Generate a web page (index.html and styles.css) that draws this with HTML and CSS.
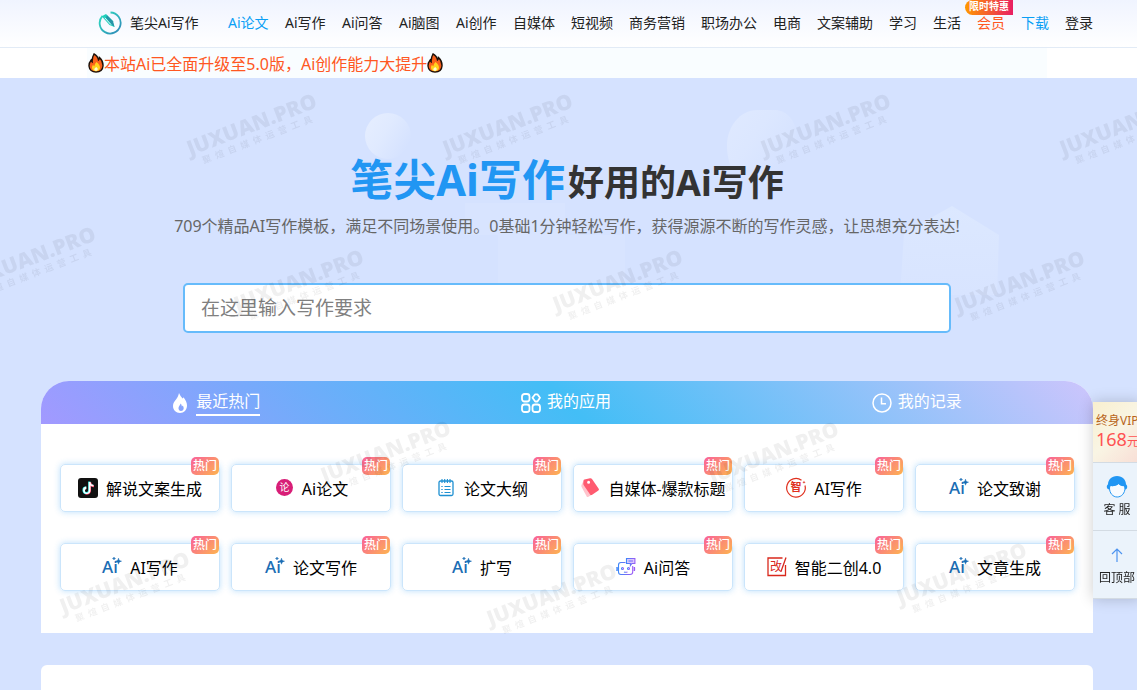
FILE: index.html
```html
<!DOCTYPE html>
<html lang="zh-CN">
<head>
<meta charset="utf-8">
<meta name="viewport" content="width=device-width, initial-scale=1">
<title>笔尖Ai写作</title>
<link rel="stylesheet" href="styles.css">
</head>
<body>
<svg class="defs" aria-hidden="true">
  <defs>
    <linearGradient id="logo-g" x1="0" y1="0" x2="1" y2="1"><stop offset="0" stop-color="#2fe0c0"/><stop offset="1" stop-color="#2f86b8"/></linearGradient>
    <linearGradient id="ball-g" x1="0" y1="0" x2="1" y2=".6"><stop offset="0" stop-color="#e6eeff"/><stop offset=".5" stop-color="#e0eaff"/><stop offset="1" stop-color="#d5e2ff"/></linearGradient>
    <linearGradient id="hex-g" x1="0" y1="0" x2="0" y2="1"><stop offset="0" stop-color="#dce8ff"/><stop offset="1" stop-color="#d8e4ff"/></linearGradient>
    <linearGradient id="bot-g" x1="0" y1="0" x2="1" y2="0"><stop offset="0" stop-color="#3f86f8"/><stop offset="1" stop-color="#9b5cf6"/></linearGradient>
    <symbol id="fire" viewBox="0 0 16 20">
      <path d="M6 1c2 1 4 3 4.500 6 .8-.6 1-1.400 1-2.400C14 7 15.200 9.800 15 13c-.3 4-3.200 6-7 6s-6.800-2.200-7-6c-.1-2.800 1-4.500 2.200-6 .2 1 .5 1.700 1 2C4 6 4.500 3.500 6 1z" fill="#f9601b" stroke="#1c1008" stroke-width="1.400"/>
      <path d="M8.500 9c2.500 2 3.700 3.800 3.500 6-.2 2-1.800 3.200-4 3.200s-3.800-1.200-4-3.200c-.1-1.500.5-2.700 1.200-3.500.2 1 .6 1.500 1.200 1.800C6.500 11.600 7.300 10.300 8.500 9z" fill="#ffd21f"/>
      <path d="M8.200 14c1.300 1 1.600 1.600 1.500 2.500-.1.900-.8 1.400-1.700 1.400s-1.600-.5-1.700-1.400c0-.8.700-1.500 1.900-2.500z" fill="#fffbd0"/>
    </symbol>
    <symbol id="spark" viewBox="0 0 20 20">
      <path d="M16.500 1.200c.4 2 .9 2.500 3 3-2.100.5-2.600 1-3 3-.4-2-.9-2.500-3-3 2.100-.5 2.600-1 3-3zM12 0c.2 1 .5 1.300 1.500 1.500C12.500 1.700 12.200 2 12 3c-.2-1-.5-1.300-1.500-1.500C11.500 1.300 11.800 1 12 0z" fill="#1a6db4" stroke="#1a6db4" stroke-width=".5"/>
    </symbol>
  </defs>
</svg>

<header class="topbar">
  <div class="topbar-inner">
    <a class="brand" href="#">
      <svg class="brand-logo" viewBox="0 0 24 24" aria-hidden="true">
        <path d="M12.500 1.500A10.500 10.500 0 1 1 4.500 4.800" fill="none" stroke="url(#logo-g)" stroke-width="1.800"/>
        <path d="M3.800 5.200 8 3l6.500 6.500 2 6.500-5-2z" fill="#1fd0bb"/>
        <path d="M9 4.200 15 10.300l1.500 5.700-3-2.500-5.500-7z" fill="#2794a8"/>
        <path d="M6.800 6.800 13 13.600" stroke="#f5f8ff" stroke-width=".9"/>
      </svg>
      <span>笔尖Ai写作</span>
    </a>
    <nav class="nav">
      <a class="nav-link nav-ai is-blue" href="#">Ai论文</a>
      <a class="nav-link nav-ai" href="#">Ai写作</a>
      <a class="nav-link nav-ai" href="#">Ai问答</a>
      <a class="nav-link nav-ai" href="#">Ai脑图</a>
      <a class="nav-link nav-ai" href="#">Ai创作</a>
      <a class="nav-link" href="#">自媒体</a>
      <a class="nav-link" href="#">短视频</a>
      <a class="nav-link" href="#">商务营销</a>
      <a class="nav-link" href="#">职场办公</a>
      <a class="nav-link" href="#">电商</a>
      <a class="nav-link" href="#">文案辅助</a>
      <a class="nav-link" href="#">学习</a>
      <a class="nav-link" href="#">生活</a>
      <a class="nav-link is-vip" href="#">会员<span class="promo">限时特惠</span></a>
      <a class="nav-link is-blue" href="#">下载</a>
      <a class="nav-link" href="#">登录</a>
    </nav>
  </div>
</header>

<div class="notice">
  <p class="notice-inner"><svg class="fire" aria-hidden="true"><use href="#fire"/></svg>本站Ai已全面升级至5.0版，Ai创作能力大提升<svg class="fire" aria-hidden="true"><use href="#fire"/></svg></p>
</div>

<main class="page">
  <svg class="decor" viewBox="0 0 1137 300" preserveAspectRatio="xMidYMin slice" aria-hidden="true">
    <circle cx="388" cy="58" r="23" fill="url(#ball-g)"/>
    <path d="M727 67c0-18 13-35 30-35h20c12 2 20 12 20 30v30h-65c-3-7-5-15-5-25z" fill="url(#ball-g)" opacity=".6"/>
    <path d="M465 125h100v32h60v50H498v-50h-33z" fill="#d8e4ff"/>
    <path d="M952 128l47 29-2 60h-97l4-62z" fill="url(#hex-g)"/>
  </svg>

  <section class="hero">
    <h1 class="title"><span class="title-main">笔尖Ai写作</span><span class="title-sub">好用的Ai写作</span></h1>
    <p class="lead">709个精品AI写作模板，满足不同场景使用。0基础1分钟轻松写作，获得源源不断的写作灵感，让思想充分表达!</p>
    <input class="prompt" type="text" aria-label="写作要求" placeholder="在这里输入写作要求">
  </section>

  <section class="panel">
    <div class="tabs" role="tablist">
      <button class="tab is-active" type="button" role="tab" aria-selected="true">
        <svg class="tab-icon" viewBox="0 0 20 20" aria-hidden="true"><path fill-rule="evenodd" d="M9 0c1.200 2.500 2.300 4 3.500 5.500.5-.4.800-.8 1-1.300 2.300 3 3.500 5.500 3.500 8.300 0 4.500-3 7.500-7 7.500s-7-3-7-7c0-3 1.300-4.500 3-6.500C7.500 4.500 8.500 2.500 9 0zm1.800 10.500c-1 1.800-2.300 3-2.300 4.800 0 1.600 1 2.700 2.500 2.700s2.700-1.100 2.700-2.700c0-1-.4-2-1-2.700-.2.500-.4.700-.8.900-.1-1.200-.5-2-1.100-3z" fill="#fff"/></svg>
        <span class="tab-label">最近热门</span>
      </button>
      <button class="tab" type="button" role="tab" aria-selected="false">
        <svg class="tab-icon" viewBox="0 0 20 20" fill="none" stroke="#fff" stroke-width="1.800" aria-hidden="true"><rect x="1" y="1" width="7.500" height="7.500" rx="2.500"/><rect x="1" y="11.500" width="7.500" height="7.500" rx="2.500"/><rect x="11.500" y="11.500" width="7.500" height="7.500" rx="2.500"/><path d="M14.200 1.300h2.200l2.600 3.500-2.600 3.700h-2.200l-2.700-3.700z" stroke-linejoin="round"/></svg>
        <span class="tab-label">我的应用</span>
      </button>
      <button class="tab" type="button" role="tab" aria-selected="false">
        <svg class="tab-icon" viewBox="0 0 20 20" fill="none" stroke="#fff" stroke-width="1.500" aria-hidden="true"><circle cx="10" cy="10" r="9"/><path d="M9.500 4.500v6.200h4.500"/></svg>
        <span class="tab-label">我的记录</span>
      </button>
    </div>

    <div class="grid">
      <a class="card" href="#"><svg class="icon" viewBox="0 0 20 20" aria-hidden="true"><rect width="20" height="20" rx="3" fill="#111"/><path d="M10.200 3.500h2.200c.2 1.800 1.200 2.800 3 3v2.200c-1.200 0-2.200-.3-3-.9v4.400a4 4 0 1 1-4.500-4v2.300a1.800 1.800 0 1 0 2.300 1.700z" fill="#25f4ee"/><path d="M11.200 4.300h2c.3 1.800 1.200 2.700 2.800 3v1.900c-1.100 0-2.200-.3-3-.9v4.500a4 4 0 0 1-6.200 3.200 4 4 0 0 0 4.400-4z" fill="#fe2c55"/><path d="M10.700 3.900h1.800c.3 1.900 1.200 2.900 3 3.100v1.500c-1.200 0-2.200-.3-3-1v4.700a3.700 3.700 0 1 1-4.100-3.700V11a1.900 1.900 0 1 0 2.300 1.800z" fill="#fff"/></svg>解说文案生成<span class="hot">热门</span></a>
      <a class="card" href="#"><svg class="icon" viewBox="0 0 20 20" aria-hidden="true"><circle cx="10.500" cy="9.500" r="8.500" fill="#d81e77"/><text class="glyph" x="10.500" y="13" font-size="10" fill="#fff">论</text></svg>Ai论文<span class="hot">热门</span></a>
      <a class="card" href="#"><svg class="icon" viewBox="0 0 20 20" fill="none" stroke="#1e90d2" aria-hidden="true"><rect x="3" y="3" width="14" height="14.500" rx="1.500" stroke-width="1.300"/><path d="M6 1v4M8.700 1v4M11.400 1v4M14 1v4" stroke-width="1.100"/><path d="M8.500 8.500h6M8.500 11.500h6M8.500 14.500h6M5.300 8.500h1.400M5.300 11.500h1.400M5.300 14.500h1.400" stroke-width="1.200"/></svg>论文大纲<span class="hot">热门</span></a>
      <a class="card" href="#"><svg class="icon" viewBox="0 0 20 20" aria-hidden="true"><path d="M1.500 7 4 1.800l8 15-4 2.200c-.5.200-1 .1-1.300-.4L1.600 9c-.3-.7-.4-1.300-.1-2z" fill="#ffc4cc"/><path fill-rule="evenodd" d="M4.500 1.500 10 .2c.8-.2 1.500.1 2 .7l6.700 9.900c.4.600.3 1.300-.3 1.700l-6.600 4.400c-.6.400-1.300.2-1.700-.4L3.600 7c-.3-.6-.4-1.100-.3-1.700l.3-2.800c.1-.5.400-.9.900-1zM8.600 2.800a1.500 1.500 0 1 0 0 3 1.500 1.500 0 0 0 0-3z" fill="#ff5b70"/></svg>自媒体-爆款标题<span class="hot">热门</span></a>
      <a class="card" href="#"><svg class="icon" viewBox="0 0 20 20" aria-hidden="true"><path d="M15.500 2.300A9.300 9.300 0 1 0 19 7.500" fill="none" stroke="#e0301e" stroke-width="1.200"/><path d="M18 2.500c.2 1.200.5 1.500 1.700 1.800-1.200.3-1.500.6-1.700 1.700-.2-1.100-.5-1.400-1.700-1.700 1.200-.3 1.500-.6 1.700-1.800z" fill="#e0301e"/><text class="glyph" x="10" y="13" font-size="11" font-weight="700" fill="#e0301e">智</text></svg>AI写作<span class="hot">热门</span></a>
      <a class="card" href="#"><svg class="icon" viewBox="0 0 20 20" aria-hidden="true"><text class="ai" x="0" y="16">Ai</text><use href="#spark"/></svg>论文致谢<span class="hot">热门</span></a>
      <a class="card" href="#"><svg class="icon" viewBox="0 0 20 20" aria-hidden="true"><text class="ai" x="0" y="16">Ai</text><use href="#spark"/></svg>AI写作<span class="hot">热门</span></a>
      <a class="card" href="#"><svg class="icon" viewBox="0 0 20 20" aria-hidden="true"><text class="ai" x="0" y="16">Ai</text><use href="#spark"/></svg>论文写作<span class="hot">热门</span></a>
      <a class="card" href="#"><svg class="icon" viewBox="0 0 20 20" aria-hidden="true"><text class="ai" x="0" y="16">Ai</text><use href="#spark"/></svg>扩写<span class="hot">热门</span></a>
      <a class="card" href="#"><svg class="icon" viewBox="0 0 20 20" fill="none" stroke="url(#bot-g)" stroke-width="1.100" aria-hidden="true"><path d="M9.500 5.500H5c-1.700 0-2.500 1-2.500 2.500v7c0 1.700 1 2.500 2.500 2.500h9c1.700 0 2.700-.9 2.700-2.500V9"/><path d="M1 10q.3 2 0 4M18.300 10q.3 2 0 4" stroke-width="1.500"/><path d="M10.500 1.500h8.400v5h-3l-1.500 2v-2h-3.900z" fill="#d9c8fd"/><path d="M12.500 4q2 .1 4.500 0"/><circle cx="6.500" cy="11.500" r="1"/><circle cx="12.500" cy="11.500" r="1"/><path d="M8 15q1.500.6 3.500 0"/></svg>Ai问答<span class="hot">热门</span></a>
      <a class="card" href="#"><svg class="icon" viewBox="0 0 20 20" aria-hidden="true"><path d="M15.500 1H1v17.500h17.500V8" fill="none" stroke="#d9281c" stroke-width="1.300"/><path d="M19 .5 14 14.500" stroke="#d9281c" stroke-width="1.300"/><text class="glyph" x="9" y="14" font-size="12" fill="#d9281c">改</text></svg>智能二创4.0<span class="hot">热门</span></a>
      <a class="card" href="#"><svg class="icon" viewBox="0 0 20 20" aria-hidden="true"><text class="ai" x="0" y="16">Ai</text><use href="#spark"/></svg>文章生成<span class="hot">热门</span></a>
    </div>
  </section>

  <section class="panel panel-next"></section>
</main>

<aside class="side">
  <a class="side-item side-vip" href="#"><span class="vip-name">终身VIP</span><span class="vip-price"><b>168</b>元</span></a>
  <a class="side-item" href="#">
    <svg class="side-icon" viewBox="0 0 22 24" aria-hidden="true"><path d="M3.500 13c0-1 .4-2 1-2.500 3 .5 6-.3 8-2 1.500 1.500 3.500 2.300 5.800 2.300.5.700.7 1.400.7 2.200 0 5-3.300 9-7.800 9S3.500 18 3.500 13z" fill="#f7fbff" stroke="#2196f3"/><path d="M11 1c5.500 0 9 3.800 9 8.500.8.400 1.200 1.200 1.200 2.300 0 1.700-.8 2.700-2.200 2.900-.2-1.500-.5-2.700-1-3.600-2.300 0-4.200-.8-5.500-2.100-2 1.700-5 2.500-8 2-.7 1-.9 2.200-1 3.700C2 14.500.8 13.500.8 11.800c0-1.100.4-1.900 1.200-2.300C2 4.800 5.500 1 11 1z" fill="#2196f3"/></svg>
    <span>客 服</span>
  </a>
  <a class="side-item" href="#">
    <svg class="side-icon" viewBox="0 0 22 24" fill="none" stroke="#4d94f0" stroke-width="1.200" aria-hidden="true"><path d="M11 19V6M6 11l5-5 5 5"/></svg>
    <span>回顶部</span>
  </a>
</aside>

<div class="marks" aria-hidden="true">
  <div class="mark">JUXUAN.PRO<small>聚&ensp;煊&ensp;自&ensp;媒&ensp;体&ensp;运&ensp;营&ensp;工&ensp;具</small></div>
  <div class="mark">JUXUAN.PRO<small>聚&ensp;煊&ensp;自&ensp;媒&ensp;体&ensp;运&ensp;营&ensp;工&ensp;具</small></div>
  <div class="mark">JUXUAN.PRO<small>聚&ensp;煊&ensp;自&ensp;媒&ensp;体&ensp;运&ensp;营&ensp;工&ensp;具</small></div>
  <div class="mark">JUXUAN.PRO<small>聚&ensp;煊&ensp;自&ensp;媒&ensp;体&ensp;运&ensp;营&ensp;工&ensp;具</small></div>
  <div class="mark">JUXUAN.PRO<small>聚&ensp;煊&ensp;自&ensp;媒&ensp;体&ensp;运&ensp;营&ensp;工&ensp;具</small></div>
  <div class="mark">JUXUAN.PRO<small>聚&ensp;煊&ensp;自&ensp;媒&ensp;体&ensp;运&ensp;营&ensp;工&ensp;具</small></div>
  <div class="mark">JUXUAN.PRO<small>聚&ensp;煊&ensp;自&ensp;媒&ensp;体&ensp;运&ensp;营&ensp;工&ensp;具</small></div>
  <div class="mark">JUXUAN.PRO<small>聚&ensp;煊&ensp;自&ensp;媒&ensp;体&ensp;运&ensp;营&ensp;工&ensp;具</small></div>
  <div class="mark">JUXUAN.PRO<small>聚&ensp;煊&ensp;自&ensp;媒&ensp;体&ensp;运&ensp;营&ensp;工&ensp;具</small></div>
  <div class="mark">JUXUAN.PRO<small>聚&ensp;煊&ensp;自&ensp;媒&ensp;体&ensp;运&ensp;营&ensp;工&ensp;具</small></div>
  <div class="mark">JUXUAN.PRO<small>聚&ensp;煊&ensp;自&ensp;媒&ensp;体&ensp;运&ensp;营&ensp;工&ensp;具</small></div>
  <div class="mark">JUXUAN.PRO<small>聚&ensp;煊&ensp;自&ensp;媒&ensp;体&ensp;运&ensp;营&ensp;工&ensp;具</small></div>
  <div class="mark">JUXUAN.PRO<small>聚&ensp;煊&ensp;自&ensp;媒&ensp;体&ensp;运&ensp;营&ensp;工&ensp;具</small></div>
</div>
</body>
</html>
```

FILE: styles.css
```css
* { box-sizing: border-box; }

html { height: 100%; }

body {
  margin: 0;
  height: 100%;
  overflow: hidden;
  display: flex;
  flex-direction: column;
  position: relative;
  font-family: "Noto Sans", "Noto Sans CJK SC", sans-serif;
  font-size: 16px;
  color: #000;
  background: #d5e2ff;
}

a { color: inherit; text-decoration: none; }
.defs { position: absolute; width: 0; height: 0; }

/* top bar */
.topbar {
  flex: none;
  background: linear-gradient(#f0f4ff, #fff);
  border-bottom: 1px solid #e2ebf6;
  padding-right: 3px;
}
.topbar-inner {
  max-width: 960px;
  height: 47px;
  margin: 0 auto;
  padding: 0 0 2px 11px;
  display: flex;
  align-items: center;
  gap: 28px;
  font-size: 14px;
  line-height: 20px;
  white-space: nowrap;
  color: #222;
}
.brand { display: flex; align-items: center; gap: 8px; flex: none; min-width: 102px; }
.brand-logo { width: 24px; height: 24px; }
.nav { display: flex; gap: 16px; }
.nav-link { position: relative; flex: none; }
.nav-ai { min-width: 41px; }
.is-blue { color: #0a9ff5; }
.is-vip { color: #ff5722; }
.promo {
  position: absolute;
  left: -12px;
  bottom: 18px;
  width: 48px;
  padding-bottom: 3px;
  font-size: 10px;
  line-height: 12px;
  font-weight: 700;
  text-align: center;
  color: #fff;
  background: linear-gradient(90deg, #ff9800, #e91e63);
  border-radius: 8px 0 0 8px;
}

/* notice */
.notice { flex: none; background: #fff; padding-right: 3px; }
.notice-inner {
  max-width: 960px;
  height: 30px;
  margin: 0 auto;
  padding: 0 1px 1px;
  display: flex;
  align-items: center;
  color: #ff5722;
  background: #f9fdff;
}
.fire { width: 16px; height: 20px; flex: none; }

/* hero */
.page {
  position: relative;
  flex: 1;
  min-height: 0;
  display: flex;
  flex-direction: column;
  align-items: center;
  padding: 72px 3px 0 0;
}
.decor { position: absolute; left: 0; top: 0; width: 100%; height: 300px; }
.hero {
  position: relative;
  width: 100%;
  max-width: 800px;
  padding: 0 16px;
  text-align: center;
}
.title { margin: 0; line-height: 60px; color: #333; white-space: nowrap; }
.title-main { font-size: 43px; color: #2196f3; margin-right: 3px; }
.title-sub { font-size: 36px; }
.lead { margin: 0 -16px; line-height: 24px; color: #666; white-space: nowrap; }
.prompt {
  display: block;
  width: 100%;
  height: 50px;
  margin-top: 45px;
  padding: 0 16px;
  font: inherit;
  font-size: 19px;
  border: 2px solid #66bbfb;
  border-radius: 5px;
  background: #fff;
}
.prompt::placeholder { color: #808080; opacity: 1; }

/* tool panel */
.panel {
  position: relative;
  width: 100%;
  max-width: 1052px;
  margin-top: 48px;
  background: #fff;
  border-radius: 28px 28px 0 0;
}
.tabs {
  display: grid;
  grid-template-columns: repeat(3, 1fr);
  height: 43px;
  border-radius: 28px 28px 0 0;
  background: linear-gradient(45deg, #a299ff, #43bef6 50%, #cdc5fc);
}
.tab {
  display: flex;
  align-items: center;
  justify-content: center;
  gap: 6px;
  padding: 0 2px 0 0;
  border: 0;
  background: none;
  font: inherit;
  color: #fff;
}
.tab-icon { width: 20px; height: 20px; }
.tab-label { line-height: 24px; padding-bottom: 1px; border-bottom: 2px solid transparent; }
.is-active .tab-label { border-color: #fff; }

.grid {
  display: grid;
  grid-template-columns: repeat(6, 1fr);
  gap: 31px 11px;
  padding: 40px 18px 42px 19px;
}
.card {
  position: relative;
  height: 48px;
  display: flex;
  align-items: center;
  justify-content: center;
  gap: 8px;
  white-space: nowrap;
  border: 1px solid #cbe5fb;
  border-radius: 5px;
  box-shadow: 0 0 6px rgba(33, 150, 243, .3);
}
.icon { width: 20px; height: 20px; flex: none; overflow: visible; }
.glyph { font-family: "Noto Sans CJK SC", sans-serif; text-anchor: middle; stroke: none; }
.ai { font-size: 17px; font-weight: 500; fill: #1a6db4; }
.hot {
  position: absolute;
  right: 0;
  top: -8px;
  width: 28px;
  font-size: 12px;
  line-height: 18px;
  font-weight: 500;
  text-align: center;
  color: #fff;
  background: linear-gradient(135deg, #f9609a, #fdb54f);
  border-radius: 5px;
}
.panel-next { flex: 1; min-height: 0; margin-top: 32px; border-radius: 6px 6px 0 0; }

/* floating side bar */
.side {
  position: fixed;
  right: -4px;
  top: 402px;
  width: 48px;
  background: #ebf3fb;
  box-shadow: 0 0 14px rgba(0, 0, 0, .2);
  font-size: 12px;
  line-height: 18px;
  color: #222;
}
.side-item {
  display: flex;
  flex-direction: column;
  align-items: center;
  justify-content: center;
  gap: 2px;
  height: 68px;
  border-bottom: 1px solid #d3dbe3;
  white-space: nowrap;
}
.side-vip {
  height: 61px;
  align-items: flex-start;
  gap: 0;
  padding: 0 0 2px 3px;
  color: #b8651b;
  background: linear-gradient(135deg, #f8efcf, #f9f5e4 50%, #f8ddd5);
}
.vip-price { color: #ff5252; }
.vip-price b { font-size: 18px; font-weight: 400; }
.side-icon { width: 22px; height: 24px; }

/* watermarks */
.marks { position: absolute; inset: 0; overflow: hidden; pointer-events: none; }
.mark {
  position: absolute;
  width: 146px;
  font-family: "Open Sans", "Noto Sans CJK SC", sans-serif;
  font-size: 21px;
  line-height: 20px;
  font-weight: 800;
  white-space: nowrap;
  color: #000;
  opacity: .06;
  transform: rotate(-21deg);
}
.mark small { display: block; padding-left: 10px; font-size: 9px; line-height: 14px; font-weight: 700; }
.mark:nth-child(1) { left: 185px; top: 112px; }
.mark:nth-child(2) { left: 441px; top: 112px; }
.mark:nth-child(3) { left: 759px; top: 112px; }
.mark:nth-child(4) { left: 1058px; top: 112px; }
.mark:nth-child(5) { left: -36px; top: 245px; }
.mark:nth-child(6) { left: 232px; top: 268px; }
.mark:nth-child(7) { left: 551px; top: 268px; }
.mark:nth-child(8) { left: 953px; top: 269px; }
.mark:nth-child(9) { left: 319px; top: 439px; }
.mark:nth-child(10) { left: 707px; top: 440px; }
.mark:nth-child(11) { left: 58px; top: 570px; }
.mark:nth-child(12) { left: 485px; top: 582px; }
.mark:nth-child(13) { left: 895px; top: 561px; }
```
